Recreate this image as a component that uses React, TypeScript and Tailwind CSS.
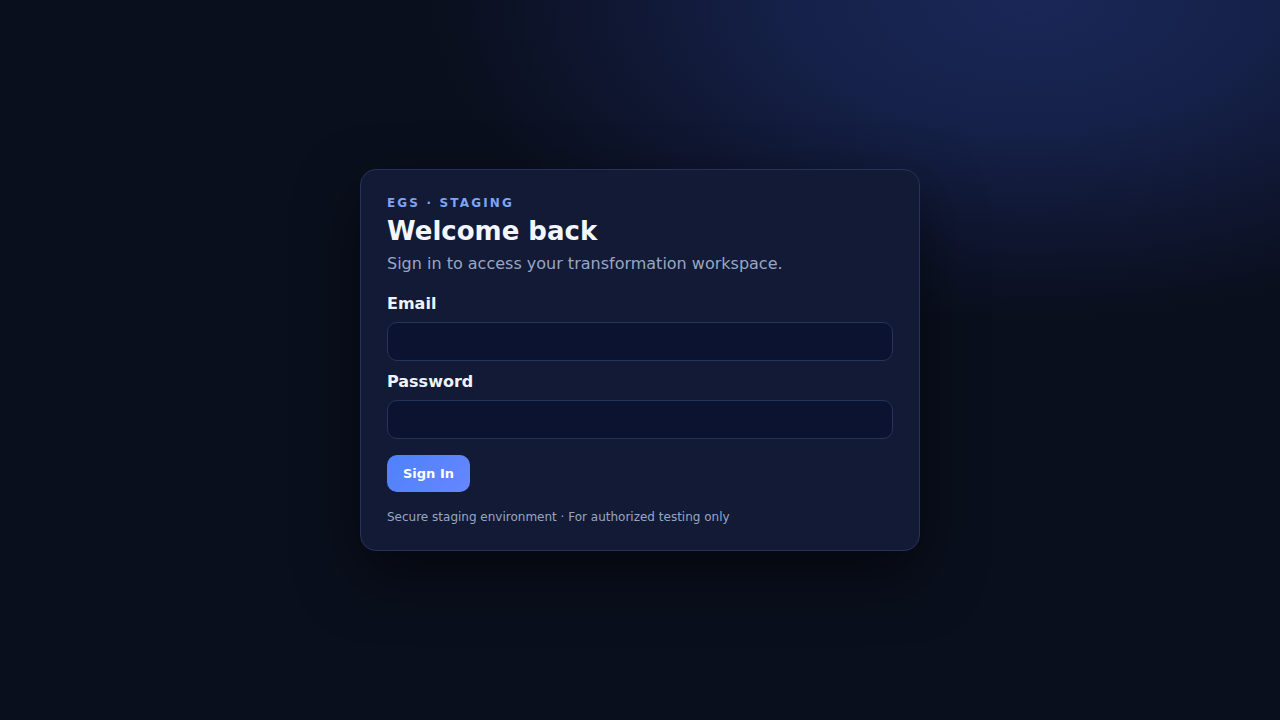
import * as React from "react"

const font = { fontFamily: '"DejaVu Sans", sans-serif' }

function Field({ label, type }: { label: string; type: string }) {
  return (
    <label className="flex flex-col gap-[7px]">
      <span className="text-[16px] font-bold leading-[22px] text-[#eef2fb]">
        {label}
      </span>
      <input
        type={type}
        className="h-[39px] w-full rounded-[10px] border border-[#26335c] bg-[#0c1331] px-3 text-[15px] text-[#e2e8f0] outline-none"
      />
    </label>
  )
}

export default function App() {
  return (
    <div
      style={font}
      className="flex min-h-[720px] w-full items-center justify-center bg-[#0a0f1d] bg-[radial-gradient(ellipse_600px_320px_at_1030px_0px,#1a2757_0%,#152149_40%,#0f1630_72%,rgba(10,15,29,0)_100%)]"
    >
      <div className="w-[560px] rounded-[16px] border border-[#263259] bg-[#121a35] px-[26px] pb-[24px] pt-[24px] shadow-[0_24px_60px_rgba(0,0,0,0.5)]">
        <div className="text-[12px] font-bold uppercase leading-[18px] tracking-[0.18em] text-[#7fa4f4]">
          EGS · STAGING
        </div>
        <h1 className="mt-[3px] text-[26px] font-bold leading-[32px] text-[#f3f6fd]">
          Welcome back
        </h1>
        <p className="mt-[6px] text-[16px] leading-[22px] text-[#98a6c4]">
          Sign in to access your transformation workspace.
        </p>
        <form className="mt-[18px] flex flex-col gap-[10px]">
          <Field label="Email" type="email" />
          <Field label="Password" type="password" />
          <div className="mt-[6px]">
            <button
              type="button"
              className="h-[37px] rounded-[10px] bg-[linear-gradient(135deg,#4d82fb,#6786ff)] px-[16px] text-[13px] font-bold text-white"
            >
              Sign In
            </button>
          </div>
        </form>
        <p className="mt-[16px] text-[12px] leading-[18px] text-[#98a6c4]">
          Secure staging environment · For authorized testing only
        </p>
      </div>
    </div>
  )
}
